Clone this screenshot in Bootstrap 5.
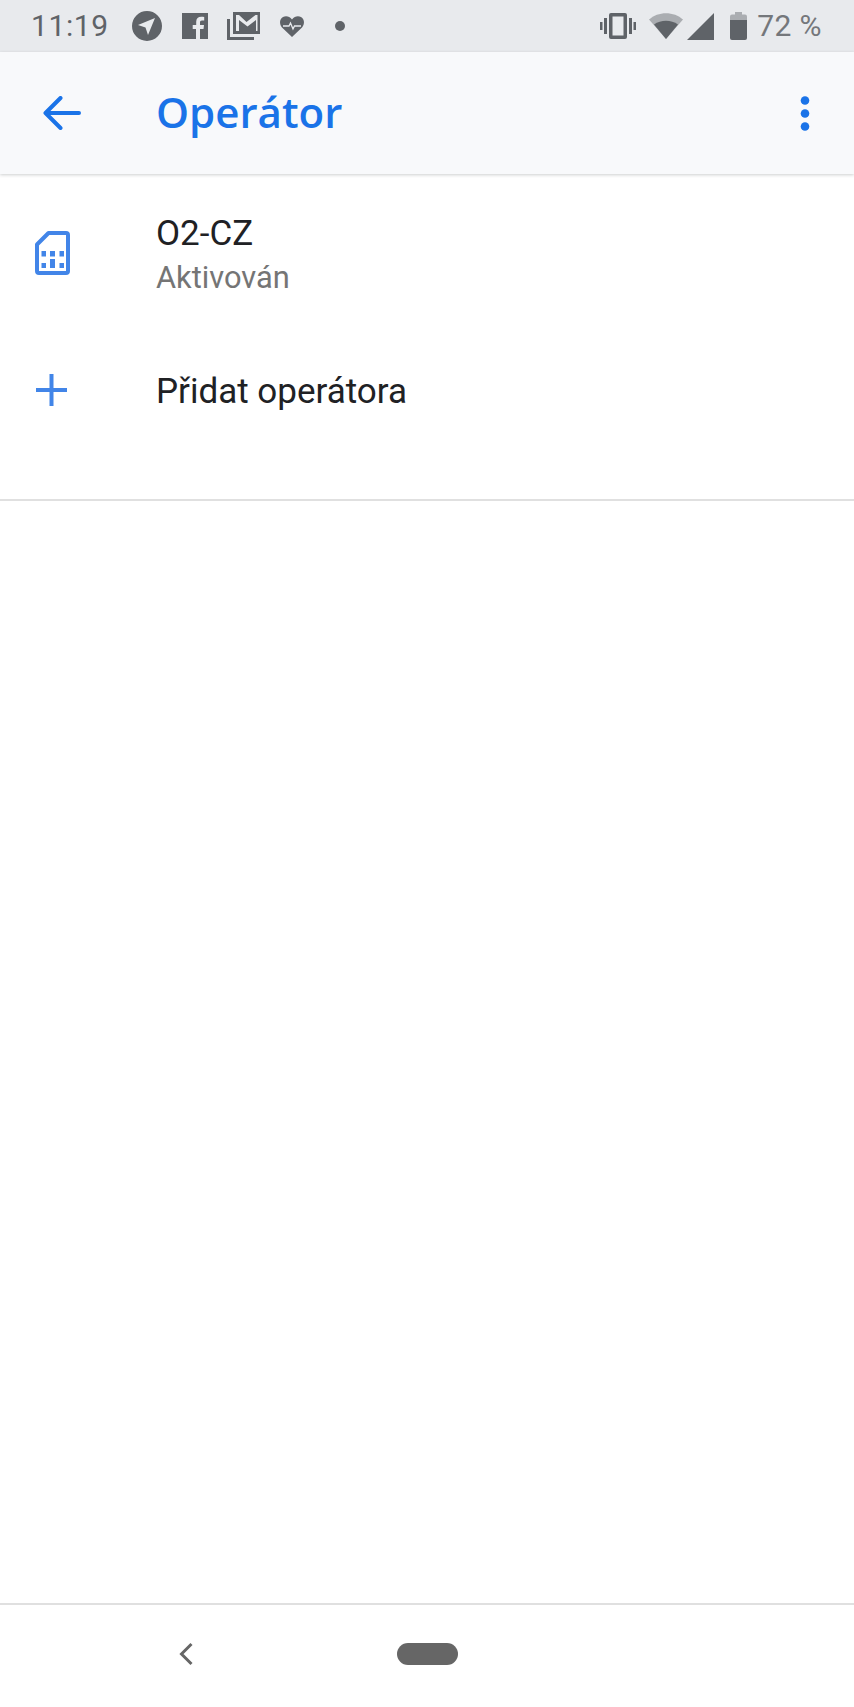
<!DOCTYPE html>
<html lang="cs">
<head>
  <meta charset="UTF-8" />
  <meta name="viewport" content="width=device-width, initial-scale=1" />
  <title>Operátor</title>
  <link href="https://cdn.jsdelivr.net/npm/bootstrap@5.3.6/dist/css/bootstrap.min.css" rel="stylesheet" />
  <style>
    html, body { margin: 0; height: 100%; }
    body { background: #fff; font-family: Roboto, "Liberation Sans", sans-serif; }
    .screen { height: 1707px; }

    /* status bar */
    .status-strip { height: 52px; background: #e8eaed; color: #5f6368; padding: 0 32px 0 31px; }
    .status-time { font-size: 30px; line-height: 1; letter-spacing: .6px; margin-right: 23px; }
    .status-pct { font-size: 30px; line-height: 1; color: #74777b; margin-left: 10px; letter-spacing: .4px; }
    .status-strip svg { display: block; flex: none; fill: #5f6368; }

    /* app bar */
    .app-strip { height: 122px; background: #f8f9fb; box-shadow: 0 1px 3px rgba(60,64,67,.25); position: relative; }
    .app-back { width: 156px; padding-left: 43px; }
    .app-title { font-family: "Open Sans", Roboto, sans-serif; font-weight: 600; font-size: 42px; color: #1a73e8; margin: 0 0 2px; line-height: 1; }
    .app-more { margin-right: 44px; }

    /* rows */
    .op-list { border-bottom: 2px solid #e0e0e0; height: 327px; padding-top: 37px; }
    .op-row { padding: 0; border: 0; background: none; }
    .op-icon { width: 156px; padding-left: 35px; flex: none; margin-bottom: 5px; }
    .op-name { font-size: 35px; line-height: 46px; color: #202124; }
    .op-sub { font-size: 30.8px; line-height: 42px; color: #757575; }
    .op-gap { margin-top: 70px; }

    /* nav bar */
    .nav-strip { height: 104px; border-top: 2px solid #e0e0e0; background: #fff; padding-bottom: 4px; }
    .nav-back { margin-left: 179px; }
    .nav-pill { width: 61px; height: 22px; border-radius: 11px; background: #666; margin-left: 204px; }
  </style>
</head>
<body>
  <div class="screen d-flex flex-column">
    <!-- status bar -->
    <div class="status-strip d-flex align-items-center">
      <span class="status-time">11:19</span>
      <svg class="me-3" width="30" height="30" viewBox="0 0 30 30"><path fill-rule="evenodd" d="M15 0a15 15 0 1 0 0 30 15 15 0 0 0 0-30zM6 14l17-7-7 17-2.500-7.500z"/></svg>
      <svg class="ms-1" width="26" height="26" viewBox="0 0 26 26"><path fill-rule="evenodd" d="M0 0h26v26H18V16h3.500l.5-4h-4V9.500c0-1.200.5-2 2-2h2.200V4c-.8-.1-1.800-.2-3-.2-3 0-5 1.800-5 5V12h-3.500v4H14v10H0z"/></svg>
      <svg style="margin-left:19px" width="33" height="28" viewBox="0 0 33 28"><path fill-rule="evenodd" d="M6 0h27v22H6zM9 3v16h3V8l8.500 6.500L29 8v11h1.500V3h-2L19.500 10 12 3z"/><path d="M0 7h3v18h24v3H0z"/></svg>
      <svg style="margin-left:20px" width="24" height="21" viewBox="0 0 24 21"><path d="M12 21 2 11.500C-1 8-.5 3 3 1c3-1.500 6.500-.8 9 2.500C14.500.2 18-.5 21 1c3.500 2 4 7 1 10.500z"/><path d="M3 10h6l1.500-3 2.500 6 1.500-3H21" fill="none" stroke="#e8eaed" stroke-width="1.300"/></svg>
      <svg style="margin-left:31px" width="10" height="10" viewBox="0 0 10 10"><circle cx="5" cy="5" r="5"/></svg>
      <div class="ms-auto d-flex align-items-center">
        <svg width="36" height="26" viewBox="0 0 36 26"><path fill-rule="evenodd" d="M11 0h14a2 2 0 0 1 2 2v22a2 2 0 0 1-2 2H11a2 2 0 0 1-2-2V2a2 2 0 0 1 2-2zm1.500 3.500v19h11v-19z"/><path d="M4 5h3v16H4zM29 5h3v16h-3zM0 9h2.500v8H0zM33.500 9H36v8h-2.500z"/></svg>
        <svg style="margin-left:13px" width="34" height="26" viewBox="0 0 34 26"><path d="M17 26 0 6.500C9-2 25-2 34 6.500z" opacity=".45"/><path d="M17 26 5 11.500c7-5 17-5 24 0z"/></svg>
        <svg style="margin-left:4px" width="27" height="27" viewBox="0 0 27 27"><path d="M27 0v27H0z"/></svg>
        <svg style="margin-left:16px" width="17" height="28" viewBox="0 0 17 28"><path d="M5 0h7v2.500h3a2 2 0 0 1 2 2V8H0V4.500a2 2 0 0 1 2-2h3z" opacity=".45"/><path d="M0 8h17v18a2 2 0 0 1-2 2H2a2 2 0 0 1-2-2z"/></svg>
        <span class="status-pct">72 %</span>
      </div>
    </div>

    <!-- app bar -->
    <div class="app-strip d-flex align-items-center">
      <div class="app-back">
        <svg class="d-block" width="38" height="34" viewBox="0 0 38 34"><path d="M36 17H3M17.500 2 2.500 17l15 15" fill="none" stroke="#1a73e8" stroke-width="4" stroke-linecap="round" stroke-linejoin="round"/></svg>
      </div>
      <h1 class="app-title flex-grow-1">Operátor</h1>
      <svg class="app-more" width="10" height="35" viewBox="0 0 10 35" fill="#1a73e8"><circle cx="5" cy="4.500" r="4.300"/><circle cx="5" cy="17.500" r="4.300"/><circle cx="5" cy="30.500" r="4.300"/></svg>
    </div>

    <!-- operators -->
    <div class="op-list list-group list-group-flush">
      <div class="op-row list-group-item d-flex align-items-center">
        <div class="op-icon">
          <svg class="d-block" width="35" height="44" viewBox="0 0 35 44">
            <path d="M13.500 2H31a2 2 0 0 1 2 2v36a2 2 0 0 1-2 2H4a2 2 0 0 1-2-2V13.500z" fill="none" stroke="#4285e8" stroke-width="4" stroke-linejoin="round"/>
            <path d="M6.500 20h4.500v5.500H6.500zM15 20h5v5.500h-5zM24.500 20H29v5.500h-4.500zM6.500 32h4.500v5H6.500zM15 28h5v9h-5zM24.500 32H29v5h-4.500z" fill="#4285e8"/>
          </svg>
        </div>
        <div>
          <div class="op-name">O2-CZ</div>
          <div class="op-sub">Aktivován</div>
        </div>
      </div>
      <div class="op-row op-gap list-group-item d-flex align-items-center">
        <div class="op-icon">
          <svg class="d-block" width="33" height="32" viewBox="0 0 33 32"><path d="M16.500 0v32M1 16h31" fill="none" stroke="#4285e8" stroke-width="4"/></svg>
        </div>
        <div class="op-name">Přidat operátora</div>
      </div>
    </div>

    <div class="flex-grow-1"></div>

    <!-- nav bar -->
    <div class="nav-strip d-flex align-items-center">
      <svg class="nav-back" width="14" height="24" viewBox="0 0 14 24"><path d="M12.500 2 2.500 12l10 10" fill="none" stroke="#666" stroke-width="3"/></svg>
      <div class="nav-pill"></div>
    </div>
  </div>
  <script src="https://cdn.jsdelivr.net/npm/bootstrap@5.3.6/dist/js/bootstrap.bundle.min.js"></script>
</body>
</html>
